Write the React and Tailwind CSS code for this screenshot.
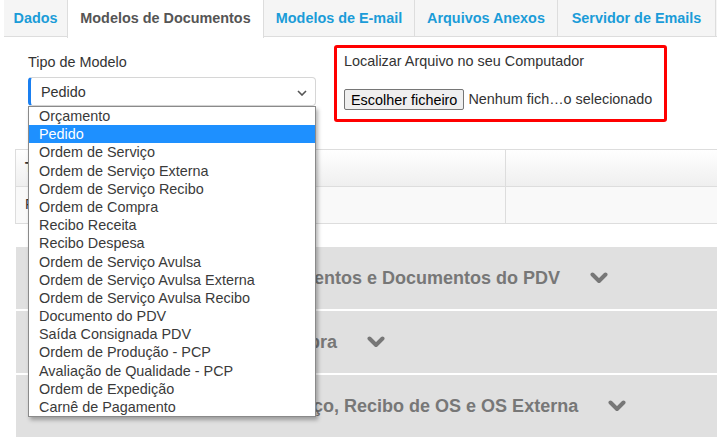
import React from "react";

const tabs = [
  { label: "Dados", w: "w-[64px]" },
  { label: "Modelos de Documentos", w: "w-[197px]", active: true },
  { label: "Modelos de E-mail", w: "w-[151px]" },
  { label: "Arquivos Anexos", w: "w-[143px]" },
  { label: "Servidor de Emails", w: "w-[158px]" },
];

const options = [
  "Orçamento",
  "Pedido",
  "Ordem de Serviço",
  "Ordem de Serviço Externa",
  "Ordem de Serviço Recibo",
  "Ordem de Compra",
  "Recibo Receita",
  "Recibo Despesa",
  "Ordem de Serviço Avulsa",
  "Ordem de Serviço Avulsa Externa",
  "Ordem de Serviço Avulsa Recibo",
  "Documento do PDV",
  "Saída Consignada PDV",
  "Ordem de Produção - PCP",
  "Avaliação de Qualidade - PCP",
  "Ordem de Expedição",
  "Carnê de Pagamento",
];

const sections = [
  "Modelos de Cupons, Orçamentos e Documentos do PDV",
  "Modelos de Ordem de Compra",
  "Modelos de Ordem de Serviço, Recibo de OS e OS Externa",
];

function Chevron() {
  return (
    <svg width="18" height="12" viewBox="0 0 18 12" className="ml-[30px] shrink-0">
      <path d="M2.5 2.5 L9 9 L15.5 2.5" fill="none" stroke="#777777" strokeWidth="4" strokeLinejoin="round" strokeLinecap="round" />
    </svg>
  );
}

export default function App() {
  return (
    <div className="w-[717px] h-[444px] overflow-hidden bg-white font-['Liberation_Sans',Arial,sans-serif] text-[#333]">
      {/* tabs */}
      <div className="ml-[4px] h-[37px] flex bg-[#f5f5f5] border-b border-[#dddddd]">
        {tabs.map((t) => (
          <div
            key={t.label}
            className={
              "shrink-0 h-[37px] flex items-center justify-center text-[14.4px] font-bold border-r border-[#dddddd] " +
              t.w +
              (t.active ? " bg-white text-[#555555] border-l h-[38px] -ml-px" : " text-[#1b9cd8]")
            }
          >
            {t.label}
          </div>
        ))}
      </div>

      {/* form row */}
      <div className="h-[112px] flex pl-[28px]">
        <div className="w-[288px] pt-[17px]">
          <div className="text-[14.4px] leading-[16px]">Tipo de Modelo</div>
          <div className="relative mt-[7px] z-10">
            <div className="h-[29px] flex items-center justify-between bg-white border border-[#d6d6d6] border-l-[3px] border-l-[#1a7ff0] rounded-[4px] pl-[10px] pr-[8px] pt-[2px] text-[14.4px]">
              <span>Pedido</span>
              <svg width="10" height="6" viewBox="0 0 10 6">
                <path d="M1 1 L5 5 L9 1" fill="none" stroke="#555" strokeWidth="1.6" />
              </svg>
            </div>
            <div className="absolute left-0 top-[29px] w-[288px] bg-white border border-[#8a8a8a] shadow-[2px_3px_4px_rgba(0,0,0,0.3)]">
              {options.map((o) => (
                <div
                  key={o}
                  className={
                    "h-[18.2px] leading-[18px] pl-[10px] text-[14.4px] " +
                    (o === "Pedido" ? "bg-[#1e90ff] text-white" : "text-[#3a3a3a]")
                  }
                >
                  {o}
                </div>
              ))}
            </div>
          </div>
        </div>

        <div className="ml-[18px] mt-[8px] w-[333px] h-[77px] border-[3px] border-[#ff0000] rounded-[3px] pl-[7px] pt-[5px]">
          <div className="text-[14.4px] leading-[16px]">Localizar Arquivo no seu Computador</div>
          <div className="mt-[20px] flex items-center">
            <button className="h-[21px] px-[6px] bg-[#efefef] border border-[#767676] rounded-[2px] text-[14.4px] leading-[18px] text-black">
              Escolher ficheiro
            </button>
            <span className="ml-[4px] text-[14.4px]">Nenhum fich…o selecionado</span>
          </div>
        </div>
      </div>

      {/* table */}
      <div className="ml-[15px] border-l border-t border-b border-[#dddddd]">
        <div className="flex h-[37px] border-b border-[#dddddd] bg-gradient-to-b from-white to-[#efefef]">
          <div className="w-[490px] border-r border-[#dddddd] flex items-center pl-[9px] text-[14.4px] font-bold">Tipo</div>
          <div className="flex-1" />
        </div>
        <div className="flex h-[36px] bg-[#f9f9f9]">
          <div className="w-[490px] border-r border-[#dddddd] flex items-center pl-[9px] text-[14.4px]">Faturamento</div>
          <div className="flex-1" />
        </div>
      </div>

      {/* accordion sections */}
      <div className="mt-[23px] ml-[16px] flex flex-col gap-[2px]">
        {sections.map((s) => (
          <div key={s} className="h-[62px] bg-[#e0e0e0] flex items-center pl-[60px]">
            <span className="text-[18px] font-bold text-[#777777] whitespace-nowrap">{s}</span>
            <Chevron />
          </div>
        ))}
      </div>
    </div>
  );
}
